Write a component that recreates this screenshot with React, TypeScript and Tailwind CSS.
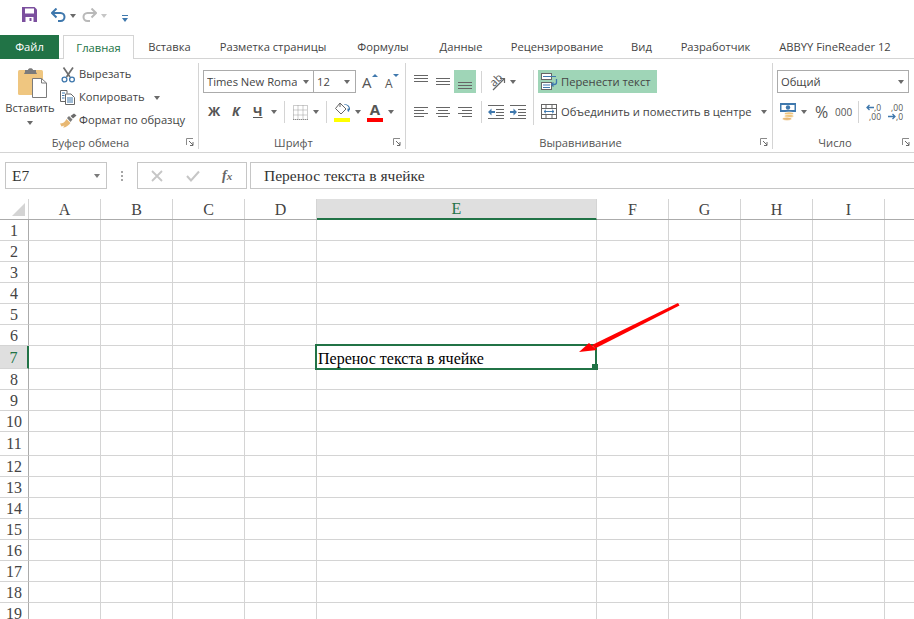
import * as React from 'react';

const tabs = [
  { title: 'Вставка', w: 'w-[71px]' },
  { title: 'Разметка страницы', w: 'w-[136px]' },
  { title: 'Формулы', w: 'w-[84px]' },
  { title: 'Данные', w: 'w-[72px]' },
  { title: 'Рецензирование', w: 'w-[120px]' },
  { title: 'Вид', w: 'w-[49px]' },
  { title: 'Разработчик', w: 'w-[99px]' },
  { title: 'ABBYY FineReader 12', w: 'w-[140px]' },
];

const columns = [
  { name: 'A', w: 'w-[72px]' },
  { name: 'B', w: 'w-[72px]' },
  { name: 'C', w: 'w-[72px]' },
  { name: 'D', w: 'w-[72px]' },
  { name: 'E', w: 'w-[280px]' },
  { name: 'F', w: 'w-[72px]' },
  { name: 'G', w: 'w-[72px]' },
  { name: 'H', w: 'w-[72px]' },
  { name: 'I', w: 'w-[72px]' },
  { name: '', w: 'w-[29px]' },
];

const rowHeight = (n: number) => {
  if (n === 7) return 'h-[23px]';
  if (n === 11) return 'h-[24px]';
  return 'h-[21px]';
};

function Caret({ className = '', color = 'border-t-[#6a6a6a]' }: { className?: string; color?: string }) {
  return <div className={`h-0 w-0 shrink-0 border-x-[3.5px] border-t-[4px] border-x-transparent ${color} ${className}`} />;
}

function Launcher() {
  return (
    <svg width="8" height="8" viewBox="0 0 8 8" className="absolute right-[4px] top-[2px]">
      <path d="M0.5 7V0.5H7" fill="none" stroke="#8a8a8a" />
      <path d="M3 3L7 7M7 4V7.5H4" fill="none" stroke="#6a6a6a" />
    </svg>
  );
}

function GroupLabel({ children }: { children: React.ReactNode }) {
  return (
    <div className="relative mt-auto flex h-[13px] items-center justify-center pr-[17px] pt-[2px] text-[#555]">
      <span>{children}</span>
      <Launcher />
    </div>
  );
}

function Lines() {
  return (
    <svg width="14" height="14" viewBox="0 0 14 14" className="shrink-0">
      {[3, 6, 9].map((y) => (
        <rect key={y} x={0} y={y} width="14" height="1" fill="#666" />
      ))}
    </svg>
  );
}

function AlignH({ side }: { side: 'l' | 'c' | 'r' }) {
  const y = [1, 4, 7, 10];
  const len = [14, 10, 14, 10];
  return (
    <svg width="14" height="13" viewBox="0 0 14 13" className="shrink-0">
      {y.map((v, i) => {
        const x = side === 'l' ? 0 : side === 'c' ? (14 - len[i]) / 2 : 14 - len[i];
        return <rect key={v} x={x} y={v} width={len[i]} height="1" fill="#666" />;
      })}
    </svg>
  );
}

function PasteIcon() {
  return (
    <svg width="29" height="31" viewBox="0 0 29 31">
      <rect x="0" y="3" width="25" height="25" rx="1.5" fill="#efc680" />
      <path d="M7 5V3H10C10 0.5 15 0.5 15 3H18V5L19 7H6Z" fill="#7b7b7b" />
      <path d="M14.5 11.5H23.5L28.5 16V30.5H14.5Z" fill="#fff" stroke="#7b7b7b" />
      <path d="M23.5 11.5V16H28.5" fill="none" stroke="#7b7b7b" />
    </svg>
  );
}

function CutIcon() {
  return (
    <svg width="15" height="16" viewBox="0 0 15 16">
      <path d="M2.5 0.5L9 10M12 0.5L5.5 10" fill="none" stroke="#6e6e6e" strokeWidth="1.7" />
      <circle cx="3.5" cy="12.5" r="2.4" fill="#fff" stroke="#3f78ad" strokeWidth="1.3" />
      <circle cx="11" cy="12.5" r="2.4" fill="#fff" stroke="#3f78ad" strokeWidth="1.3" />
    </svg>
  );
}

function CopyIcon() {
  return (
    <svg width="15" height="15" viewBox="0 0 15 15">
      <path d="M0.5 0.5H7V3.5M5 11.5H0.5V0.5" fill="#fff" stroke="#666" />
      <path d="M2 3H5M2 5.5H4.5M2 8H4.5" stroke="#3f78ad" />
      <path d="M5.5 4H11L14.5 7.5V14.5H5.5Z" fill="#fff" stroke="#666" />
      <path d="M7 8H13M7 10H13M7 12H13" stroke="#3f78ad" />
    </svg>
  );
}

function BrushIcon() {
  return (
    <svg width="17" height="15" viewBox="0 0 17 15">
      <path d="M0 10.5C3 10.5 5 9 6.5 6L10.5 10C8.5 13 4.5 15 3 14.5L4.5 12.5L1.5 13.5Z" fill="#e8b873" />
      <path d="M7 5L9 3L12.5 6.5L10.5 9Z" fill="#7a7a7a" />
      <path d="M10.5 3L14 0.5L16.5 2.5L13 5.5Z" fill="#6a6a6a" />
    </svg>
  );
}

function FontSizeIcon({ small }: { small?: boolean }) {
  return (
    <div className="flex h-[16px] w-[15px] shrink-0 items-start">
      <span className={small ? 'mt-[4px] text-[12px] leading-[12px] text-[#555]' : 'mt-[1px] text-[15px] leading-[15px] text-[#555]'}>A</span>
      {small ? (
        <div className="h-0 w-0 border-x-[3px] border-t-[3px] border-x-transparent border-t-[#3f78ad]" />
      ) : (
        <div className="h-0 w-0 border-x-[3px] border-b-[3px] border-x-transparent border-b-[#3f78ad]" />
      )}
    </div>
  );
}

function BordersIcon() {
  return (
    <svg width="15" height="15" viewBox="0 0 15 15" className="shrink-0">
      <path d="M0.5 0.5H14.5V14.5H0.5ZM5 0.5V14.5M10 0.5V14.5M0.5 5H14.5M0.5 10H14.5" fill="none" stroke="#9a9a9a" strokeDasharray="1 1" />
      <path d="M0 14.5H15" stroke="#8a8a8a" strokeDasharray="1 1" />
    </svg>
  );
}

function FillIcon() {
  return (
    <svg width="17" height="20" viewBox="0 0 17 20" className="shrink-0">
      <path d="M6 1L1.5 6.5L7 12L12 7Z" fill="#fff" stroke="#666" />
      <path d="M6 1V5" stroke="#666" />
      <path d="M10 2.5C13 2.5 15 5 15 7C15 8 16 9 16 7C16 4.5 14 2 10 2Z" fill="#3f78ad" />
      <path d="M13.5 6.5L15.5 6.5L15 10L13.5 9Z" fill="#3f78ad" />
      <rect x="0" y="16" width="16" height="4" fill="#ffff00" />
    </svg>
  );
}

function OrientationIcon() {
  return (
    <div className="relative h-[18px] w-[18px] shrink-0">
      <span className="absolute left-[1px] top-[1px] -rotate-45 text-[11px] leading-[11px] text-[#555]">ab</span>
      <svg width="18" height="18" viewBox="0 0 18 18" className="absolute left-0 top-0">
        <path d="M5 17L16 6" stroke="#666" strokeWidth="1.2" />
        <path d="M12 5.5H16.5V10" fill="none" stroke="#666" strokeWidth="1.2" />
      </svg>
    </div>
  );
}

function WrapIcon() {
  return (
    <svg width="17" height="17" viewBox="0 0 17 17" className="shrink-0">
      <rect x="0.5" y="0.5" width="10" height="6" fill="#fff" stroke="#666" />
      <path d="M2 3.5H15" stroke="#3f78ad" />
      <rect x="0.5" y="9.5" width="10" height="7" fill="#fff" stroke="#666" />
      <path d="M2 12H9M2 14.5H9" stroke="#3f78ad" />
      <path d="M15.5 6V9.5C15.5 11 14.5 11.5 13 11.5H11" fill="none" stroke="#3f78ad" strokeWidth="1.3" />
      <path d="M12.5 9.5L10.5 11.5L12.5 13.5" fill="none" stroke="#3f78ad" strokeWidth="1.3" />
    </svg>
  );
}

function MergeIcon() {
  return (
    <svg width="17" height="16" viewBox="0 0 17 16" className="shrink-0">
      <rect x="0.5" y="0.5" width="15" height="14" fill="#fff" stroke="#666" />
      <path d="M0.5 4.5H15.5M0.5 10.5H15.5M5 0.5V4.5M11 0.5V4.5M5 10.5V14.5M11 10.5V14.5" stroke="#666" />
      <path d="M3 7.5H13M5 5.8L3 7.5L5 9.2M11 5.8L13 7.5L11 9.2" fill="none" stroke="#3f78ad" />
    </svg>
  );
}

function IndentIcon({ out }: { out?: boolean }) {
  return (
    <svg width="16" height="14" viewBox="0 0 16 14" className="shrink-0">
      <path d="M0 0.5H16M0 13.5H16M8 4.5H16M8 7.5H16M8 10.5H16" stroke="#666" />
      {out ? (
        <path d="M0 7L3.5 3.5V6H7V8H3.5V10.5Z" fill="#3f78ad" />
      ) : (
        <path d="M7 7L3.5 3.5V6H0V8H3.5V10.5Z" fill="#3f78ad" />
      )}
    </svg>
  );
}

function CurrencyIcon() {
  return (
    <svg width="17" height="18" viewBox="0 0 17 18" className="shrink-0">
      <rect x="0" y="0" width="16" height="9" fill="#3f78ad" />
      <rect x="1.5" y="2" width="13" height="5" fill="#fff" />
      <circle cx="8" cy="4.5" r="2.2" fill="#3f78ad" />
      <ellipse cx="9" cy="10.5" rx="4.5" ry="1.6" fill="#efc680" stroke="#fff" strokeWidth="0.5" />
      <ellipse cx="9" cy="13" rx="4.5" ry="1.6" fill="#efc680" stroke="#fff" strokeWidth="0.5" />
      <ellipse cx="7" cy="15.8" rx="4.5" ry="1.6" fill="#e8b873" stroke="#fff" strokeWidth="0.5" />
    </svg>
  );
}

function MiniArrow({ dir }: { dir: 'l' | 'r' }) {
  return (
    <svg width="8" height="7" viewBox="0 0 8 7" className="shrink-0">
      <path d={dir === 'l' ? 'M8 3.5H1M3.5 1L1 3.5L3.5 6' : 'M0 3.5H7M4.5 1L7 3.5L4.5 6'} fill="none" stroke="#3f78ad" strokeWidth="1.3" />
    </svg>
  );
}

function DecimalIcon({ more }: { more?: boolean }) {
  return (
    <div className="flex w-[15px] shrink-0 flex-col gap-px text-[8.5px] leading-[8px] text-[#555]">
      {more ? (
        <>
          <div className="flex items-center justify-between">
            <MiniArrow dir="l" />
            <span>,0</span>
          </div>
          <span className="text-right">,00</span>
        </>
      ) : (
        <>
          <span className="text-right">,00</span>
          <div className="flex items-center justify-between">
            <MiniArrow dir="r" />
            <span>,0</span>
          </div>
        </>
      )}
    </div>
  );
}

function Combo({ children, w, caretClass = 'mr-[5px]' }: { children: React.ReactNode; w: string; caretClass?: string }) {
  return (
    <div className={`flex h-[23px] shrink-0 items-center justify-between border border-[#ababab] pl-[3px] ${w}`}>
      <span className="overflow-hidden whitespace-nowrap pt-px">{children}</span>
      <Caret className={caretClass} />
    </div>
  );
}

function QuickAccess() {
  return (
    <div className="flex h-[35px] items-center">
      <svg width="15" height="15" viewBox="0 0 15 15" className="ml-[22px] -mt-[6px]">
        <path d="M0 0H12.5L15 2.5V15H0Z" fill="#7b4f9e" />
        <rect x="3" y="1.5" width="9" height="5" fill="#fff" />
        <rect x="3.5" y="10" width="8" height="5" fill="#fff" />
        <rect x="7.5" y="11" width="2" height="3" fill="#7b4f9e" />
      </svg>
      <svg width="15" height="14" viewBox="0 0 15 14" className="ml-[14px] -mt-[6px]">
        <path d="M2 5H9.5C12 5 13.5 7 13.5 9C13.5 11 12 13 9.5 13H7" fill="none" stroke="#3f78ad" strokeWidth="2" />
        <path d="M5.5 0.5L1 5L5.5 9.5" fill="none" stroke="#3f78ad" strokeWidth="2" />
      </svg>
      <Caret className="ml-[4px] -mt-[4px]" />
      <svg width="15" height="14" viewBox="0 0 15 14" className="ml-[6px] -mt-[6px]">
        <path d="M13 5H5.5C3 5 1.5 7 1.5 9C1.5 11 3 13 5.5 13H8" fill="none" stroke="#b9b9b9" strokeWidth="2" />
        <path d="M9.5 0.5L14 5L9.5 9.5" fill="none" stroke="#b9b9b9" strokeWidth="2" />
      </svg>
      <Caret className="ml-[4px] -mt-[4px]" color="border-t-[#c6c6c6]" />
      <div className="ml-[15px] mt-[1px] flex flex-col items-center gap-[2px]">
        <div className="h-px w-[6px] bg-[#3f78ad]" />
        <Caret color="border-t-[#3f78ad]" />
      </div>
    </div>
  );
}

function TabBar() {
  return (
    <div className="flex h-[24px] border-b border-[#d4d4d4]">
      <div className="flex h-[24px] w-[59px] items-center justify-center bg-[#217346] pt-px text-white">Файл</div>
      <div className="ml-[4px] flex h-[24px] w-[71px] items-center justify-center border-x border-t border-[#d4d4d4] bg-white pt-px text-[#217346]">Главная</div>
      {tabs.map((tab) => (
        <div key={tab.title} className={`flex items-center justify-center whitespace-nowrap pt-px text-[#444] ${tab.w}`}>
          {tab.title}
        </div>
      ))}
    </div>
  );
}

function ClipboardGroup() {
  return (
    <div className="flex h-[86px] w-[199px] shrink-0 flex-col border-r border-[#d4d4d4]">
      <div className="flex">
        <div className="flex w-[60px] flex-col items-center pt-[4px]">
          <div className="ml-[5px] h-[31px]"><PasteIcon /></div>
          <span className="mt-[2px] leading-[16px]">Вставить</span>
          <Caret className="mt-[5px]" />
        </div>
        <div className="flex flex-col">
          <div className="flex h-[23px] items-center">
            <div className="w-[19px] pl-px"><CutIcon /></div>
            <span>Вырезать</span>
          </div>
          <div className="flex h-[23px] items-center">
            <div className="w-[19px]"><CopyIcon /></div>
            <span>Копировать</span>
            <Caret className="ml-[9px]" />
          </div>
          <div className="flex h-[23px] items-center">
            <div className="w-[19px]"><BrushIcon /></div>
            <span>Формат по образцу</span>
          </div>
        </div>
      </div>
      <GroupLabel>Буфер обмена</GroupLabel>
    </div>
  );
}

function FontGroup() {
  return (
    <div className="flex h-[86px] w-[207px] shrink-0 flex-col border-r border-[#d4d4d4]">
      <div className="mt-[7px] flex h-[23px] items-center pl-[4px]">
        <Combo w="w-[111px]" caretClass="mr-[4px]">Times New Roma</Combo>
        <Combo w="w-[43px] -ml-px">12</Combo>
        <div className="ml-[6px]"><FontSizeIcon /></div>
        <div className="ml-[8px]"><FontSizeIcon small /></div>
      </div>
      <div className="mt-[5px] flex h-[28px] items-center text-[13px] text-[#555]">
        <span className="ml-[9px] w-[12px] font-bold">Ж</span>
        <span className="ml-[12px] w-[9px] font-bold italic">К</span>
        <span className="ml-[12px] w-[13px] font-bold underline">Ч</span>
        <Caret className="ml-[5px]" />
        <div className="ml-[7px] h-[22px] w-px bg-[#d4d4d4]" />
        <div className="ml-[8px]"><BordersIcon /></div>
        <Caret className="ml-[5px]" />
        <div className="ml-[7px] h-[22px] w-px bg-[#d4d4d4]" />
        <div className="ml-[7px]"><FillIcon /></div>
        <Caret className="ml-[4px]" />
        <div className="ml-[6px] flex w-[16px] flex-col items-center">
          <span className="h-[15px] text-[15px] font-bold leading-[15px] text-[#555]">A</span>
          <div className="mt-[1px] h-[4px] w-[16px] bg-[#ff0000]" />
        </div>
        <Caret className="ml-[5px]" />
      </div>
      <GroupLabel>Шрифт</GroupLabel>
    </div>
  );
}

function AlignGroup() {
  return (
    <div className="flex h-[86px] w-[367px] shrink-0 flex-col border-r border-[#d4d4d4]">
      <div className="mt-[7px] flex">
        <div className="flex w-[127px] shrink-0 flex-col">
          <div className="flex h-[23px] items-center">
            <div className="ml-[8px] -mt-[6px]"><Lines /></div>
            <div className="ml-[8px]"><Lines /></div>
            <div className="ml-[4px] flex h-[23px] w-[22px] items-center justify-center bg-[#9fd5b7]">
              <div className="mt-[8px]"><Lines /></div>
            </div>
            <div className="ml-[5px] h-[22px] w-px bg-[#d4d4d4]" />
            <div className="ml-[6px]"><OrientationIcon /></div>
            <Caret className="ml-[4px]" />
          </div>
          <div className="mt-[5px] flex h-[28px] items-center">
            <div className="ml-[8px]"><AlignH side="l" /></div>
            <div className="ml-[8px]"><AlignH side="c" /></div>
            <div className="ml-[8px]"><AlignH side="r" /></div>
            <div className="ml-[9px] h-[22px] w-px bg-[#d4d4d4]" />
            <div className="ml-[6px]"><IndentIcon out /></div>
            <div className="ml-[6px]"><IndentIcon /></div>
          </div>
        </div>
        <div className="h-[55px] w-px shrink-0 bg-[#d4d4d4]" />
        <div className="ml-[4px] flex flex-col">
          <div className="flex h-[23px] w-[119px] items-center gap-[3px] bg-[#9fd5b7] pl-[3px]">
            <WrapIcon />
            <span className="pt-px">Перенести текст</span>
          </div>
          <div className="mt-[5px] flex h-[28px] items-center gap-[3px] pl-[3px]">
            <MergeIcon />
            <span className="whitespace-nowrap pt-px">Объединить и поместить в центре</span>
            <Caret className="ml-[6px]" />
          </div>
        </div>
      </div>
      <GroupLabel>Выравнивание</GroupLabel>
    </div>
  );
}

function NumberGroup() {
  return (
    <div className="flex h-[86px] w-[141px] shrink-0 flex-col">
      <div className="mt-[7px] pl-[4px]">
        <Combo w="w-[132px]" caretClass="mr-[4px]">Общий</Combo>
      </div>
      <div className="mt-[5px] flex h-[28px] items-center">
        <div className="ml-[7px]"><CurrencyIcon /></div>
        <Caret className="ml-[4px]" />
        <span className="ml-[8px] w-[14px] text-[16px] text-[#555]">%</span>
        <span className="ml-[6px] w-[18px] text-[10px] text-[#555]">000</span>
        <div className="ml-[5px] h-[22px] w-px bg-[#d4d4d4]" />
        <div className="ml-[7px]"><DecimalIcon more /></div>
        <div className="ml-[7px]"><DecimalIcon /></div>
      </div>
      <GroupLabel>Число</GroupLabel>
    </div>
  );
}

function FormulaBar() {
  return (
    <div className="mt-[9px] flex h-[27px] font-['Liberation_Serif',serif] text-[15.5px] text-[#333]">
      <div className="ml-[5px] flex w-[102px] items-center justify-between border border-[#c6c6c6] pl-[6px] pt-px">
        <span>E7</span>
        <Caret className="mr-[6px]" color="border-t-[#7a7a7a]" />
      </div>
      <div className="flex w-[30px] flex-col items-center justify-center gap-[2px]">
        <div className="h-[2px] w-[2px] bg-[#a6a6a6]" />
        <div className="h-[2px] w-[2px] bg-[#a6a6a6]" />
        <div className="h-[2px] w-[2px] bg-[#a6a6a6]" />
      </div>
      <div className="flex w-[110px] items-center border border-[#c6c6c6]">
        <svg width="12" height="12" viewBox="0 0 12 12" className="ml-[13px]">
          <path d="M1 1L11 11M11 1L1 11" stroke="#c6c6c6" strokeWidth="1.8" />
        </svg>
        <svg width="14" height="12" viewBox="0 0 14 12" className="ml-[23px]">
          <path d="M1 6L5 10.5L13 1.5" fill="none" stroke="#c6c6c6" strokeWidth="2" />
        </svg>
        <span className="ml-[22px] text-[14px] font-semibold italic text-[#666]">f<span className="text-[11px]">x</span></span>
      </div>
      <div className="ml-[3px] flex flex-1 items-center border-y border-l border-[#c6c6c6] pl-[13px] pt-px text-[#333]">
        Перенос текста в ячейке
      </div>
    </div>
  );
}

function Sheet() {
  const rows = Array.from({ length: 19 }, (_, i) => i + 1);
  return (
    <div className="mt-[10px] font-['Liberation_Serif',serif] text-[16px] text-[#444]">
      <div className="flex h-[21px] border-b border-[#ababab]">
        <div className="flex w-[29px] items-end justify-end border-r border-[#d4d4d4] pb-[3px] pr-[3px]">
          <div className="h-0 w-0 border-b-[13px] border-l-[13px] border-b-[#d4d4d4] border-l-transparent" />
        </div>
        {columns.map((c) =>
          c.name === 'E' ? (
            <div key={c.name} className={`-mb-px flex h-[21px] items-center justify-center border-b-2 border-r border-b-[#217346] border-r-[#d4d4d4] bg-[#dfdfdf] pt-px text-[#217346] ${c.w}`}>
              {c.name}
            </div>
          ) : (
            <div key={c.w + c.name} className={`flex items-center justify-center border-r border-[#d4d4d4] pt-px last:border-r-0 ${c.w}`}>
              {c.name}
            </div>
          ),
        )}
      </div>
      {rows.map((n) => (
        <div key={n} className={`flex ${rowHeight(n)}`}>
          {n === 7 ? (
            <div className="flex w-[29px] items-center justify-center border-b border-r-2 border-b-[#d4d4d4] border-r-[#217346] bg-[#dfdfdf] pt-px text-[#217346]">{n}</div>
          ) : (
            <div className="flex w-[29px] items-center justify-center border-b border-r border-b-[#d4d4d4] border-r-[#ababab] pt-px">{n}</div>
          )}
          {columns.map((c) => (
            <div key={c.w + c.name} className={`relative border-b border-r border-[#d4d4d4] last:border-r-0 ${c.w}`}>
              {n === 7 && c.name === 'E' && (
                <>
                  <div className="absolute -left-[2px] -top-[2px] z-10 flex h-[26px] w-[282px] items-center whitespace-nowrap border-2 border-[#217346] bg-white pl-px pt-[3px] text-black">
                    Перенос текста в ячейке
                  </div>
                  <div className="absolute -bottom-[2px] -right-[2px] z-10 h-[6px] w-[6px] bg-[#217346]" />
                </>
              )}
            </div>
          ))}
        </div>
      ))}
    </div>
  );
}

export default function App() {
  return (
    <div className="relative h-[619px] w-[914px] overflow-hidden bg-white font-['Open_Sans',sans-serif] text-[11.2px] text-[#444]">
      <QuickAccess />
      <TabBar />
      <div className="flex h-[94px] border-b border-[#d4d4d4] pt-[4px]">
        <ClipboardGroup />
        <FontGroup />
        <AlignGroup />
        <NumberGroup />
      </div>
      <FormulaBar />
      <Sheet />
      <svg width="110" height="60" viewBox="0 0 110 60" className="absolute left-[575px] top-[300px] z-20">
        <path d="M103 3L104.5 5.5L20 48.5L17 45Z" fill="#ff0000" />
        <path d="M4 52L14 43L22 50Z" fill="#ff0000" />
      </svg>
    </div>
  );
}
